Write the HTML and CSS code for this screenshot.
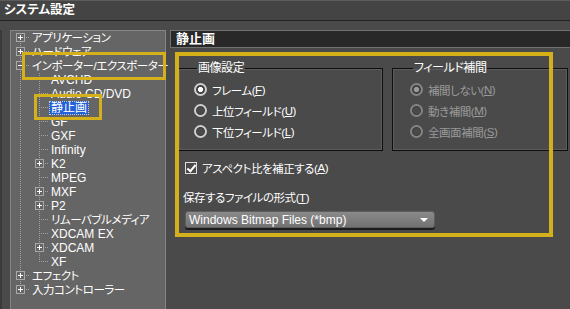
FILE: index.html
```html
<!DOCTYPE html>
<html lang="ja">
<head>
    <meta charset="UTF-8">
    <title>システム設定</title>
    <link rel="stylesheet" href="styles.css">
</head>
<body>
    <div class="titlebar">システム設定</div>
    <div class="main">
        <div class="tree">
            <div class="row"><div class="c f"><span class="x"></span></div><span class="label ja">アプリケーション</span></div>
            <div class="row"><div class="c t"><span class="x"></span></div><span class="label ja">ハードウェア</span></div>
            <div class="row"><div class="c t"><span class="x minus"></span></div><span class="label ja">インポーター/エクスポーター</span></div>
            <div class="row"><div class="c i"></div><div class="c t"></div><span class="label">AVCHD</span></div>
            <div class="row"><div class="c i"></div><div class="c t"></div><span class="label">Audio CD/DVD</span></div>
            <div class="row"><div class="c i"></div><div class="c t"></div><span class="label sel">静止画</span></div>
            <div class="row"><div class="c i"></div><div class="c t"></div><span class="label">GF</span></div>
            <div class="row"><div class="c i"></div><div class="c t"></div><span class="label">GXF</span></div>
            <div class="row"><div class="c i"></div><div class="c t"></div><span class="label">Infinity</span></div>
            <div class="row"><div class="c i"></div><div class="c t"><span class="x"></span></div><span class="label">K2</span></div>
            <div class="row"><div class="c i"></div><div class="c t"></div><span class="label">MPEG</span></div>
            <div class="row"><div class="c i"></div><div class="c t"><span class="x"></span></div><span class="label">MXF</span></div>
            <div class="row"><div class="c i"></div><div class="c t"><span class="x"></span></div><span class="label">P2</span></div>
            <div class="row"><div class="c i"></div><div class="c t"></div><span class="label ja">リムーバブルメディア</span></div>
            <div class="row"><div class="c i"></div><div class="c t"></div><span class="label">XDCAM EX</span></div>
            <div class="row"><div class="c i"></div><div class="c t"><span class="x"></span></div><span class="label">XDCAM</span></div>
            <div class="row"><div class="c i"></div><div class="c l"></div><span class="label">XF</span></div>
            <div class="row"><div class="c t"><span class="x"></span></div><span class="label ja">エフェクト</span></div>
            <div class="row"><div class="c l"><span class="x"></span></div><span class="label ja">入力コントローラー</span></div>
        </div>

        <div class="pane">
            <div class="pane-head">静止画</div>
            <div class="pane-body">
                <div class="groups">
                    <fieldset class="group image-group">
                        <legend class="ja">画像設定</legend>
                        <div class="opt ja"><span class="radio on"></span>フレーム(<u>F</u>)</div>
                        <div class="opt ja"><span class="radio"></span>上位フィールド(<u>U</u>)</div>
                        <div class="opt ja"><span class="radio"></span>下位フィールド(<u>L</u>)</div>
                    </fieldset>
                    <fieldset class="group field-group">
                        <legend class="ja">フィールド補間</legend>
                        <div class="opt ja off"><span class="radio on"></span>補間しない(<u>N</u>)</div>
                        <div class="opt ja off"><span class="radio"></span>動き補間(<u>M</u>)</div>
                        <div class="opt ja off"><span class="radio"></span>全画面補間(<u>S</u>)</div>
                    </fieldset>
                </div>
                <div class="check-row ja"><span class="checkbox"></span>アスペクト比を補正する(<u>A</u>)</div>
                <div class="format-label ja">保存するファイルの形式(<u>T</u>)</div>
                <div class="select">Windows Bitmap Files (*bmp)<span class="arrow"></span></div>
            </div>
        </div>
    </div>

    <div class="mark mark-import"></div>
    <div class="mark mark-still"></div>
    <div class="mark mark-pane"></div>
</body>
</html>
```

FILE: styles.css
```css
:root {
    --dot-v: repeating-linear-gradient(to bottom, #a2a2a2 0 1px, transparent 1px 2px);
    --dot-h: repeating-linear-gradient(to right, #a2a2a2 0 1px, transparent 1px 2px);
    --yellow: #d4b01a;
}

html, body {
    margin: 0;
    padding: 0;
}

body {
    width: 570px;
    height: 309px;
    overflow: hidden;
    position: relative;
    background-color: #4a4a4a;
    color: #ffffff;
    font-family: "Liberation Sans", "Noto Sans CJK JP", sans-serif;
    font-size: 12px;
    font-feature-settings: "palt";
}

/* japanese runs are set a bit tighter, like the ui font in the shot */
.ja {
    font-size: 11.5px;
    letter-spacing: -0.45px;
}

u {
    text-decoration: underline;
    text-underline-offset: 1px;
}

.titlebar {
    height: 19px;
    line-height: 19px;
    padding-left: 4px;
    border-top: 1px solid #5c5c5c;
    border-bottom: 1px solid #242424;
    background-color: #444444;
    font-size: 12.5px;
    font-weight: bold;
}

.main {
    display: flex;
    gap: 4px;
    margin-top: 9px;
    padding-left: 8px;
    border-left: 2px solid #3a3a3a;
    height: 279px;
}

/* tree */

.tree {
    width: 154px;
    flex: none;
    background-color: #656565;
    border: 1px solid #858585;
    border-bottom: none;
}

.row {
    display: flex;
    height: 14px;
    line-height: 14px;
    white-space: nowrap;
}

.c {
    width: 19px;
    height: 14px;
    flex: none;
}

.c.i {
    background: var(--dot-v) 9px 0 / 1px 100% no-repeat;
}

.c.t {
    background: var(--dot-v) 9px 0 / 1px 100% no-repeat,
                var(--dot-h) 9px 6px / 10px 1px no-repeat;
}

.c.f {
    background: var(--dot-v) 9px 6px / 1px 8px no-repeat,
                var(--dot-h) 9px 6px / 10px 1px no-repeat;
}

.c.l {
    background: var(--dot-v) 9px 0 / 1px 7px no-repeat,
                var(--dot-h) 9px 6px / 10px 1px no-repeat;
}

.x {
    display: block;
    width: 9px;
    height: 9px;
    box-sizing: border-box;
    margin: 2px 0 0 5px;
    border: 1px solid #a8a8a8;
    background: linear-gradient(#fff, #fff) center / 5px 1px no-repeat,
                linear-gradient(#fff, #fff) center / 1px 5px no-repeat,
                #656565;
}

.x.minus {
    background: linear-gradient(#fff, #fff) center / 5px 1px no-repeat, #656565;
}

.label {
    margin-left: 2px;
}

.label.sel {
    margin-left: 0;
    padding: 0 2px;
    background-color: #2362d6;
    outline: 1px dotted #c8c8c8;
    outline-offset: -1px;
}

/* right pane */

.pane {
    flex: 1;
    display: flex;
    flex-direction: column;
}

.pane-head {
    height: 16px;
    line-height: 16px;
    padding-left: 5px;
    border: 1px solid #707070;
    border-right: none;
    background-color: #282828;
    font-size: 13px;
    font-weight: bold;
}

.pane-body {
    padding: 13px 2px 0 8px;
}

.groups {
    display: flex;
    gap: 9px;
}

.group {
    margin: 0;
    padding: 4px 0 8px 15px;
    border: 1px solid #0e0e0e;
    box-shadow: inset 0 0 0 1px #5c5c5c;
    min-width: 0;
}

.group legend {
    padding: 0 1px;
    margin-left: 3px;
    line-height: 14px;
    font-size: 12px;
}

.image-group {
    width: 205px;
    box-sizing: border-box;
    flex: none;
}

.field-group {
    flex: 1;
    padding-left: 17px;
}

.opt {
    display: flex;
    align-items: center;
    height: 21px;
    white-space: nowrap;
}

.opt.off {
    color: #9a9a9a;
}

.radio {
    width: 13px;
    height: 13px;
    box-sizing: border-box;
    margin-right: 5px;
    border-radius: 50%;
    border: 2px solid #cfcfcf;
    box-shadow: inset 0 0 0 1px #3a3a3a;
    flex: none;
}

.radio.on {
    background: radial-gradient(circle, #ffffff 0 2.3px, transparent 2.8px);
}

.opt.off .radio {
    border-color: #858585;
}

.opt.off .radio.on {
    background: radial-gradient(circle, #9a9a9a 0 2.3px, transparent 2.8px);
}

.check-row {
    display: flex;
    align-items: center;
    height: 16px;
    margin-top: 9px;
    padding-left: 7px;
}

.checkbox {
    width: 12px;
    height: 12px;
    box-sizing: border-box;
    margin-right: 5px;
    border: 1px solid #dcdcdc;
    position: relative;
}

.checkbox::after {
    content: "";
    position: absolute;
    left: 3px;
    top: 0px;
    width: 3px;
    height: 7px;
    border: solid #ffffff;
    border-width: 0 2px 2px 0;
    transform: rotate(40deg);
}

.format-label {
    height: 16px;
    line-height: 16px;
    margin-top: 14px;
    padding-left: 5px;
}

.select {
    position: relative;
    width: 250px;
    height: 17px;
    line-height: 16px;
    box-sizing: border-box;
    margin: 5px 0 0 7px;
    padding-left: 3px;
    border: 1px solid #5e5e5e;
    border-radius: 3px;
    background: linear-gradient(#8a8a8a, #727272);
    box-shadow: 0 2px 0 #1c1c1c;
}

.arrow {
    position: absolute;
    right: 6px;
    top: 6px;
    width: 0;
    height: 0;
    border-left: 4px solid transparent;
    border-right: 4px solid transparent;
    border-top: 4px solid #ffffff;
}

/* annotation frames */

.mark {
    position: absolute;
    box-sizing: border-box;
    border: 3px solid var(--yellow);
}

.mark-import {
    left: 22px;
    top: 52px;
    width: 144px;
    height: 28px;
}

.mark-still {
    left: 34px;
    top: 94px;
    width: 68px;
    height: 26px;
}

.mark-pane {
    left: 175px;
    top: 52px;
    width: 378px;
    height: 185px;
    border-width: 4px;
}
```
